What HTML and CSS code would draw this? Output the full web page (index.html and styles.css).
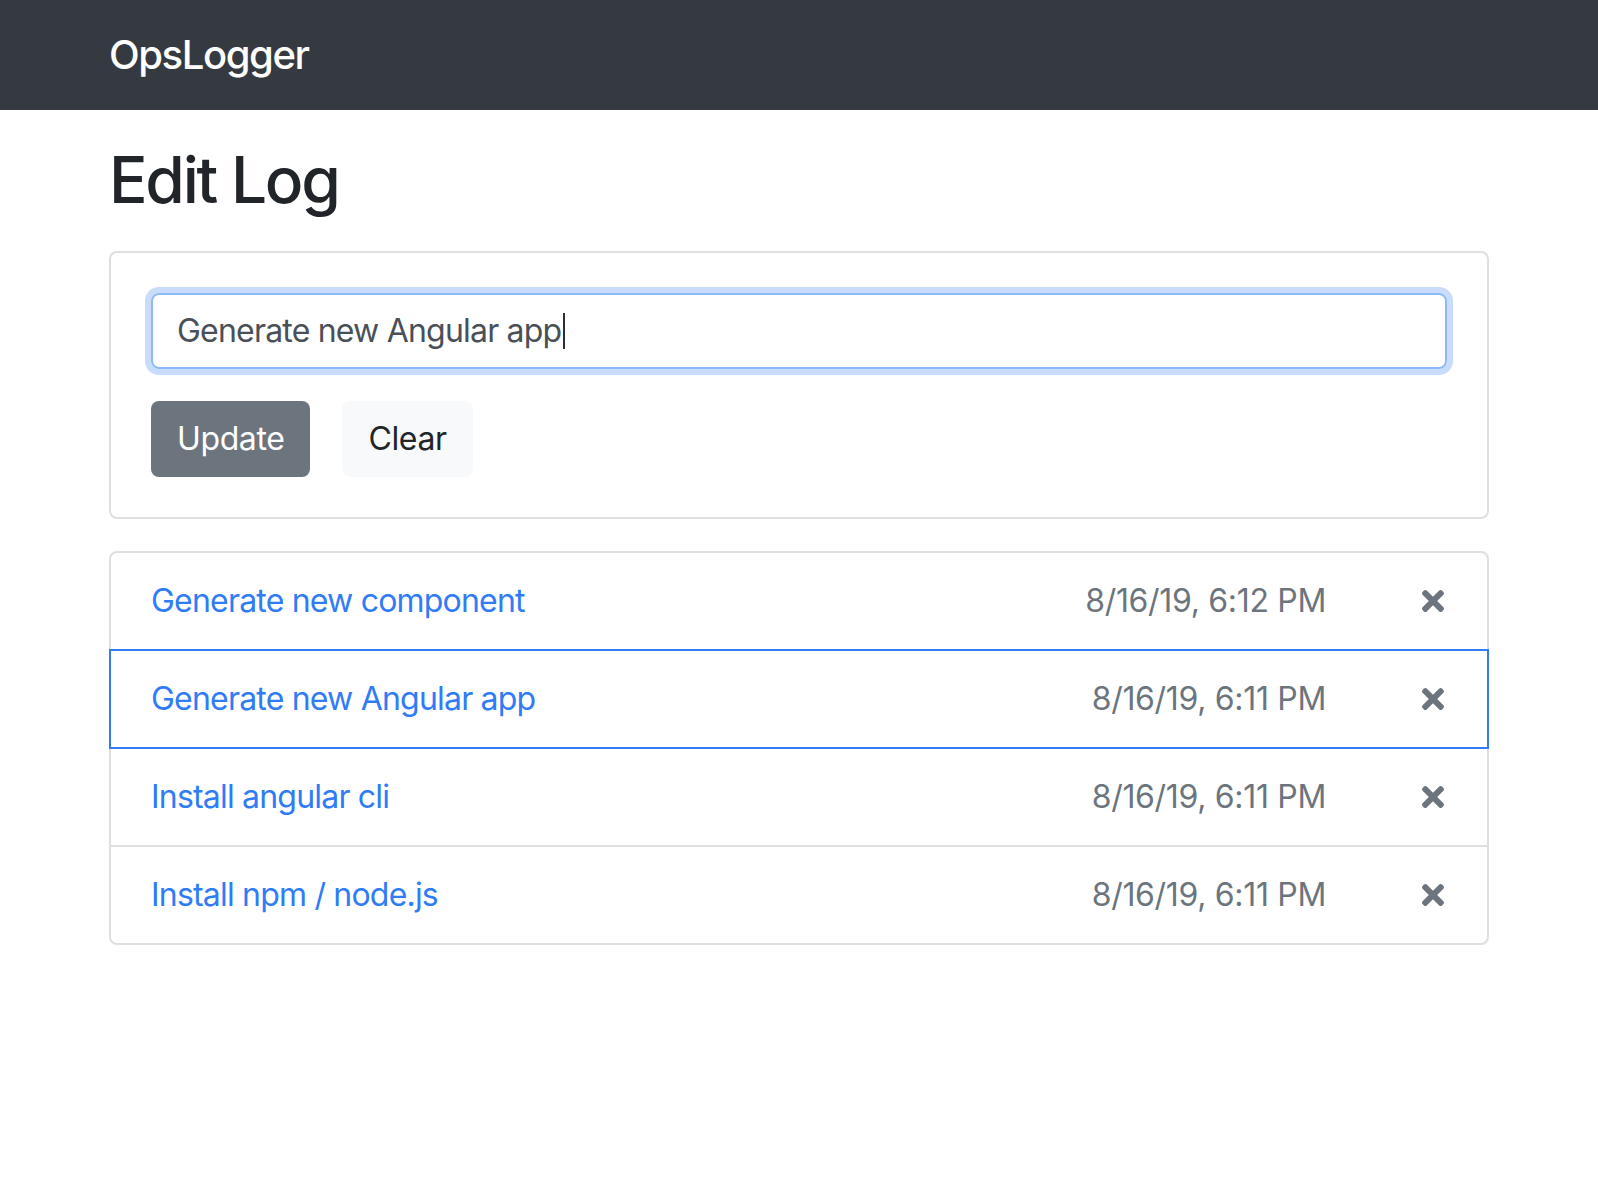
FILE: index.html
```html
<!DOCTYPE html>
<html lang="en">
<head>
<meta charset="utf-8">
<title>OpsLogger</title>
<link rel="stylesheet" href="styles.css">
</head>
<body>
<nav class="navbar">
  <div class="container nav-inner">
    <a class="brand" href="#">OpsLogger</a>
  </div>
</nav>
<main class="container">
  <h2 class="page-title">Edit Log</h2>
  <section class="card">
    <div class="form-control"><span class="value">Generate new Angular app</span><span class="caret"></span></div>
    <div class="actions">
      <button class="btn btn-secondary" type="button">Update</button>
      <button class="btn btn-light" type="button">Clear</button>
    </div>
  </section>
  <ul class="list-group">
    <li class="list-item">
      <a class="log-text" href="#">Generate new component</a>
      <span class="log-date">8/16/19, 6:12 PM</span>
      <span class="log-action"><svg class="icon-times" viewBox="0 80 352 352"><path d="M242.72 256l100.07-100.07c12.28-12.28 12.28-32.19 0-44.48l-22.24-22.24c-12.28-12.28-32.19-12.28-44.48 0L176 189.28 75.93 89.21c-12.28-12.28-32.19-12.28-44.48 0L9.21 111.45c-12.28 12.28-12.28 32.19 0 44.48L109.28 256 9.21 356.07c-12.28 12.28-12.28 32.19 0 44.48l22.24 22.24c12.28 12.28 32.2 12.28 44.48 0L176 322.72l100.07 100.07c12.28 12.28 32.2 12.28 44.48 0l22.24-22.24c12.28-12.28 12.28-32.19 0-44.48L242.72 256z"/></svg></span>
    </li>
    <li class="list-item selected">
      <a class="log-text" href="#">Generate new Angular app</a>
      <span class="log-date">8/16/19, 6:11 PM</span>
      <span class="log-action"><svg class="icon-times" viewBox="0 80 352 352"><path d="M242.72 256l100.07-100.07c12.28-12.28 12.28-32.19 0-44.48l-22.24-22.24c-12.28-12.28-32.19-12.28-44.48 0L176 189.28 75.93 89.21c-12.28-12.28-32.19-12.28-44.48 0L9.21 111.45c-12.28 12.28-12.28 32.19 0 44.48L109.28 256 9.21 356.07c-12.28 12.28-12.28 32.19 0 44.48l22.24 22.24c12.28 12.28 32.2 12.28 44.48 0L176 322.72l100.07 100.07c12.28 12.28 32.2 12.28 44.48 0l22.24-22.24c12.28-12.28 12.28-32.19 0-44.48L242.72 256z"/></svg></span>
    </li>
    <li class="list-item">
      <a class="log-text" href="#">Install angular cli</a>
      <span class="log-date">8/16/19, 6:11 PM</span>
      <span class="log-action"><svg class="icon-times" viewBox="0 80 352 352"><path d="M242.72 256l100.07-100.07c12.28-12.28 12.28-32.19 0-44.48l-22.24-22.24c-12.28-12.28-32.19-12.28-44.48 0L176 189.28 75.93 89.21c-12.28-12.28-32.19-12.28-44.48 0L9.21 111.45c-12.28 12.28-12.28 32.19 0 44.48L109.28 256 9.21 356.07c-12.28 12.28-12.28 32.19 0 44.48l22.24 22.24c12.28 12.28 32.2 12.28 44.48 0L176 322.72l100.07 100.07c12.28 12.28 32.2 12.28 44.48 0l22.24-22.24c12.28-12.28 12.28-32.19 0-44.48L242.72 256z"/></svg></span>
    </li>
    <li class="list-item">
      <a class="log-text" href="#">Install npm / node.js</a>
      <span class="log-date">8/16/19, 6:11 PM</span>
      <span class="log-action"><svg class="icon-times" viewBox="0 80 352 352"><path d="M242.72 256l100.07-100.07c12.28-12.28 12.28-32.19 0-44.48l-22.24-22.24c-12.28-12.28-32.19-12.28-44.48 0L176 189.28 75.93 89.21c-12.28-12.28-32.19-12.28-44.48 0L9.21 111.45c-12.28 12.28-12.28 32.19 0 44.48L109.28 256 9.21 356.07c-12.28 12.28-12.28 32.19 0 44.48l22.24 22.24c12.28 12.28 32.2 12.28 44.48 0L176 322.72l100.07 100.07c12.28 12.28 32.2 12.28 44.48 0l22.24-22.24c12.28-12.28 12.28-32.19 0-44.48L242.72 256z"/></svg></span>
    </li>
  </ul>
</main>
</body>
</html>
```
FILE: styles.css
```css
* { box-sizing: border-box; }
html, body { margin: 0; padding: 0; background: #fff; }
body {
  font-family: Inter, "Noto Sans", "Liberation Sans", sans-serif;
  font-size: 32px;
  line-height: 1.5;
  letter-spacing: -0.025em;
  color: #212529;
}
.container { width: 1380px; margin: 0 auto; }
.navbar { background: #353a40; height: 110px; }
.nav-inner { height: 110px; display: flex; align-items: center; }
.brand {
  color: #fff;
  font-size: 40px;
  font-weight: 500;
  letter-spacing: -0.035em;
  text-decoration: none;
  line-height: 60px;
}
.page-title {
  font-size: 64px;
  font-weight: 500;
  line-height: 1.2;
  letter-spacing: -0.035em;
  margin: 32px 0 32px;
  color: #212529;
}
.card {
  border: 2px solid #dfdfdf;
  border-radius: 8px;
  padding: 40px;
}
.form-control {
  height: 76px;
  border: 2px solid #8bbaf8;
  border-radius: 8px;
  box-shadow: 0 0 0 6px #cadcfb;
  padding: 0 24px;
  color: #495057;
  display: flex;
  align-items: center;
}
.caret { display: inline-block; width: 2px; height: 36px; background: #2b2f33; margin-left: 2px; }
.actions { margin-top: 32px; display: flex; gap: 32px; }
.btn {
  font-family: inherit;
  font-size: 32px;
  letter-spacing: -0.012em;
  line-height: 48px;
  height: 76px;
  padding: 0 24px;
  border: 2px solid transparent;
  border-radius: 8px;
}
.btn-secondary { background: #6c757d; color: #fff; }
.btn-light { background: #f8f9fa; color: #212529; }
.list-group { list-style: none; margin: 32px 0 0; padding: 0; }
.list-item {
  border: 2px solid #dfdfdf;
  margin-bottom: -2px;
  padding: 24px 40px;
  display: flex;
  align-items: center;
  position: relative;
}
.list-item:first-child { border-radius: 8px 8px 0 0; }
.list-item:last-child { border-radius: 0 0 8px 8px; margin-bottom: 0; }
.list-item.selected { border-color: #2f7cf6; z-index: 1; }
.log-text { flex: 1; color: #2f7cf6; text-decoration: none; }
.log-date { color: #6c757d; letter-spacing: -0.01em; }
.log-action { width: 121px; display: flex; justify-content: flex-end; }
.icon-times { width: 22px; height: 22px; fill: #6c757d; margin-right: 3px; }
```
